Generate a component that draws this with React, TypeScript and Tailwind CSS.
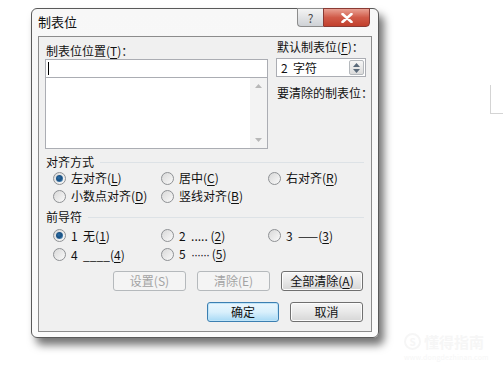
import React from 'react';

const font = { fontFamily: '"Noto Sans CJK SC", "Liberation Sans", sans-serif' };

const U = ({ children }: { children: React.ReactNode }) => <span className="underline underline-offset-2">{children}</span>;

const Radio = ({ checked, label }: { checked?: boolean; label: React.ReactNode }) => (
  <div className="flex items-center gap-[5px] h-full">
    <span className="w-[13px] h-[13px] rounded-full border border-[#8e9194] bg-gradient-to-br from-[#d8d8d8] to-[#fafafa] flex items-center justify-center shrink-0">
      {checked && <span className="w-[7px] h-[7px] rounded-full bg-[radial-gradient(circle_at_40%_40%,#2c6fa8_0%,#1a4f80_45%,#6fb0e0_100%)]" />}
    </span>
    <span className="text-[12px] leading-none text-[#111] whitespace-nowrap">{label}</span>
  </div>
);

const Btn = ({ children, disabled, def, w }: { children: React.ReactNode; disabled?: boolean; def?: boolean; w: string }) => (
  <div
    className={`${w} h-[20px] rounded-[3px] border flex items-center justify-center text-[12px] leading-none ${
      disabled
        ? 'border-[#b5b9bc] bg-[#f4f4f4] text-[#a3a3a3]'
        : def
        ? 'border-[#3c7fb1] bg-gradient-to-b from-[#eaf6fd] via-[#d9f0fc] to-[#a7d9f5] text-[#111] shadow-[inset_0_0_0_1px_#bfe4f8]'
        : 'border-[#707070] bg-gradient-to-b from-[#f6f6f6] via-[#e8e8e8] to-[#d6d6d6] text-[#111] shadow-[inset_0_0_0_1px_#fcfcfc]'
    }`}
  >
    {children}
  </div>
);

const GroupLabel = ({ children }: { children: React.ReactNode }) => (
  <div className="flex items-center gap-[6px] h-[14px] pl-[7px] pr-[7px]">
    <span className="text-[12px] leading-none text-[#111] whitespace-nowrap">{children}</span>
    <span className="flex-1 h-px bg-[#dde2e6]" />
  </div>
);

const sp = '\u00a0\u00a0';

export default function App() {
  return (
    <div className="w-[503px] h-[386px] bg-white relative overflow-hidden" style={font}>
      {/* canvas marks */}
      <div className="absolute left-[490px] top-[85px] w-[13px] h-[29px] border-l border-b border-[#d4d4d4]" />
      <div className="absolute left-[404px] top-[333px] flex flex-col items-start text-[#f6f6f6] whitespace-nowrap">
        <div className="flex items-center gap-[3px] text-[15px] font-bold leading-none">
          <span className="w-[17px] h-[17px] rounded-full border-2 border-[#f6f6f6] flex items-center justify-center text-[10px]">S</span>
          懂得指南
        </div>
        <div className="text-[7px] leading-none mt-[4px] tracking-wide">www.dongdezhinan.com</div>
      </div>

      {/* dialog window */}
      <div className="absolute left-[31px] top-[8px] w-[348px] h-[330px] rounded-[6px] border border-[#5a5a5a] bg-gradient-to-b from-[#f7f7f7] to-[#fbfbfb] shadow-[5px_7px_9px_rgba(0,0,0,0.55)] flex flex-col">
        {/* title bar */}
        <div className="h-[27px] flex items-start">
          <span className="pl-[6px] pt-[6px] text-[13px] leading-none text-[#111]">制表位</span>
          <div className="ml-auto mr-[8px] flex -mt-px">
            <div className="w-[26px] h-[19px] rounded-bl-[4px] border border-[#8c8c8c] border-r-0 bg-gradient-to-b from-[#f4f4f4] to-[#cfd2d6] flex items-center justify-center text-[12px] text-[#4a4a4a] leading-none">
              ?
            </div>
            <div className="w-[47px] h-[19px] rounded-br-[4px] border border-[#8a3a34] bg-gradient-to-b from-[#e8a093] via-[#d05a48] to-[#c23f2c] flex items-center justify-center">
              <svg width="12" height="10" viewBox="0 0 12 10">
                <path d="M1.5 1 L10.5 9 M10.5 1 L1.5 9" stroke="#fff" strokeWidth="2.6" strokeLinecap="round" />
              </svg>
            </div>
          </div>
        </div>

        {/* client area */}
        <div className="mx-[6px] h-[296px] border border-[#8c8c8c] bg-[#f0f0f0] flex flex-col">
          <div className="flex pt-[4px] h-[118px] shrink-0">
            {/* left column */}
            <div className="w-[229px] pl-[6px] flex flex-col">
              <div className="pt-[4px] pl-px h-[18px] text-[12px] leading-none text-[#111]">
                制表位位置(<U>T</U>)：
              </div>
              <div className="h-[19px] border border-[#abadb3] bg-white flex items-center pl-[2px]">
                <span className="w-px h-[13px] bg-black" />
              </div>
              <div className="h-[72px] -mt-px border border-[#abadb3] bg-white flex justify-end">
                <div className="w-[17px] h-full bg-[#f3f3f3] flex flex-col items-center justify-between py-[6px]">
                  <svg width="7" height="4" viewBox="0 0 7 4"><path d="M0 4 L3.5 0 L7 4 Z" fill="#b8b8b8" /></svg>
                  <svg width="7" height="4" viewBox="0 0 7 4"><path d="M0 0 L3.5 4 L7 0 Z" fill="#b8b8b8" /></svg>
                </div>
              </div>
            </div>
            {/* right column */}
            <div className="ml-[8px] w-[90px] flex flex-col">
              <div className="h-[17px] pl-px text-[12px] leading-none text-[#111]">
                默认制表位(<U>F</U>)：
              </div>
              <div className="h-[19px] border border-[#abadb3] bg-white flex items-center">
                <span className="pl-[4px] text-[12px] leading-none text-[#111] whitespace-pre">2  字符</span>
                <div className="ml-auto mr-[1px] w-[15px] h-[15px] border border-[#b5b9bd] rounded-[2px] bg-gradient-to-b from-[#f6f6f6] to-[#dcdcdc] flex flex-col items-center justify-center gap-[2px]">
                  <svg width="7" height="4" viewBox="0 0 7 4"><path d="M0 4 L3.5 0 L7 4 Z" fill="#5a6a7a" /></svg>
                  <svg width="7" height="4" viewBox="0 0 7 4"><path d="M0 0 L3.5 4 L7 0 Z" fill="#5a6a7a" /></svg>
                </div>
              </div>
              <div className="pt-[10px] pl-px text-[12px] leading-none text-[#111] whitespace-nowrap">要清除的制表位：</div>
            </div>
          </div>

          {/* alignment */}
          <GroupLabel>对齐方式</GroupLabel>
          <div className="pl-[14px] grid grid-cols-[108px_107px_auto] auto-rows-[18px]">
            <Radio checked label={<>左对齐(<U>L</U>)</>} />
            <Radio label={<>居中(<U>C</U>)</>} />
            <Radio label={<>右对齐(<U>R</U>)</>} />
            <Radio label={<>小数点对齐(<U>D</U>)</>} />
            <Radio label={<>竖线对齐(<U>B</U>)</>} />
          </div>

          {/* leader */}
          <div className="pt-[5px]">
            <GroupLabel>前导符</GroupLabel>
          </div>
          <div className="pl-[14px] pt-[2px] grid grid-cols-[108px_107px_auto] auto-rows-[19px]">
            <Radio checked label={<>1{sp}无(<U>1</U>)</>} />
            <Radio label={<>2{sp}.....{'\u00a0'}(<U>2</U>)</>} />
            <Radio label={<>3{sp}——(<U>3</U>)</>} />
            <Radio label={<>4{sp}____(<U>4</U>)</>} />
            <Radio
              label={
                <>
                  5{sp}
                  <span style={{ fontFamily: '"Liberation Sans", sans-serif' }} className="tracking-[-1px]">
                    ······
                  </span>
                  {'\u00a0'}(<U>5</U>)
                </>
              }
            />
          </div>

          {/* buttons */}
          <div className="flex justify-end gap-[11px] pr-[8px] pt-[7px]">
            <Btn disabled w="w-[73px]">设置(S)</Btn>
            <Btn disabled w="w-[73px]">清除(E)</Btn>
            <Btn w="w-[82px]">全部清除(<U>A</U>)</Btn>
          </div>
          <div className="flex justify-end gap-[11px] pr-[8px] pt-[11px]">
            <Btn def w="w-[72px]">确定</Btn>
            <Btn w="w-[73px]">取消</Btn>
          </div>
        </div>
      </div>
    </div>
  );
}
